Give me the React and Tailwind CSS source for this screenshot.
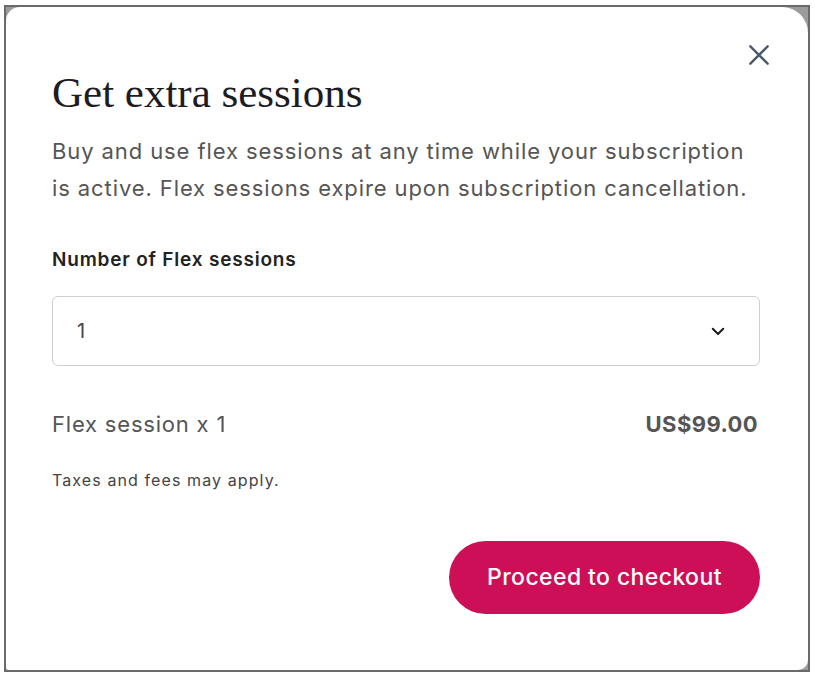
import React, { useState } from 'react';

const sans = { fontFamily: 'Inter, "Liberation Sans", Arial, sans-serif' };

export default function App() {
  const [count, setCount] = useState('1');

  return (
    <div className="w-[815px] h-[677px] bg-white pl-[4px] pt-[5px]">
      <div className="w-[806px] h-[667px] border-2 border-[#6a6a6a] bg-[#9c9c9c]">
        <div
          className="relative h-full bg-white rounded-tl-[14px] rounded-tr-[26px] rounded-br-[10px] rounded-bl-[3px] pl-[46px] pr-[48px] pt-[60px]"
          style={sans}
        >
          <button className="absolute top-[31px] right-[32px] p-1 text-[#4b5a69]" aria-label="Close">
            <svg width="26" height="26" viewBox="0 0 24 24" fill="none" stroke="currentColor" strokeWidth="2.2" strokeLinecap="round">
              <path d="M4 4 L20 20 M20 4 L4 20" />
            </svg>
          </button>

          <h2
            className="text-[43px] leading-[52px] text-[#1c1c22]"
            style={{ fontFamily: '"Liberation Serif", "Times New Roman", serif' }}
          >
            Get extra sessions
          </h2>

          <p className="mt-[14px] text-[22px] leading-[37px] tracking-[0.9px] text-[#555555]">
            Buy and use flex sessions at any time while your subscription is active. Flex sessions expire upon subscription cancellation.
          </p>

          <label className="block mt-[41px] text-[19px] leading-[24px] tracking-[0.8px] font-semibold text-[#222222]">
            Number of Flex sessions
          </label>

          <div className="mt-[24px] h-[70px] border border-[#cfcfcf] rounded-[6px] flex items-center justify-between pl-[24px] pr-[32px]">
            <span className="text-[20px] text-[#444444]">{count}</span>
            <svg width="18" height="18" viewBox="0 0 24 24" fill="none" stroke="#1a1a1a" strokeWidth="2.6" strokeLinecap="round" strokeLinejoin="round">
              <path d="M5 9 L12 16 L19 9" />
            </svg>
          </div>

          <div className="mt-[43px] flex items-center justify-between">
            <span className="text-[22px] leading-[30px] tracking-[0.8px] text-[#555555]">Flex session x 1</span>
            <span className="text-[22px] leading-[30px] tracking-[0.4px] font-bold text-[#555555] mr-[2px]">US$99.00</span>
          </div>

          <p className="mt-[30px] text-[16px] leading-[22px] tracking-[1.1px] text-[#444444]">Taxes and fees may apply.</p>

          <div className="mt-[50px] flex justify-end">
            <button
              onClick={() => setCount('1')}
              className="w-[311px] h-[73px] rounded-full bg-[#cc0f57] text-white text-[23px] tracking-[0.4px] font-medium"
            >
              Proceed to checkout
            </button>
          </div>
        </div>
      </div>
    </div>
  );
}
